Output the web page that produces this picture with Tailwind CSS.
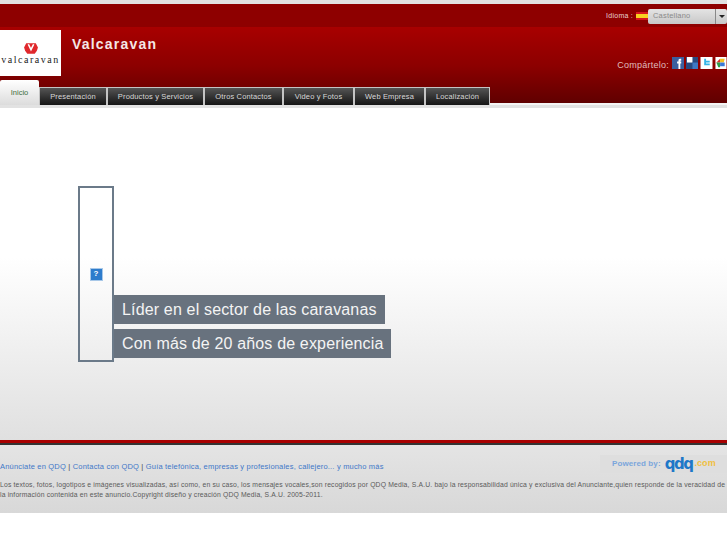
<!DOCTYPE html>
<html lang="es"><head><meta charset="utf-8"><script src="https://cdn.jsdelivr.net/npm/@tailwindcss/browser@4"></script></head>
<body class="w-[727px] h-[545px] overflow-hidden bg-white font-['Liberation_Sans',sans-serif]">
<div class="h-1 bg-[#e2e2e2]"></div>
<header class="h-[101px] flex flex-col relative overflow-hidden">
  <div class="h-[23px] bg-[#8e0000] flex items-center justify-end pt-[1px]">
    <span class="text-[7px] tracking-[0.25px] text-[#e8d0d0] mr-[3px]">Idioma :</span>
    <svg class="w-[12px] h-[8px]" viewBox="0 0 12 8"><rect width="12" height="8" fill="#d8141c"/><rect y="2" width="12" height="4" fill="#f8d020"/></svg>
    <div class="w-[79px] h-[15px] bg-gradient-to-b from-[#e4e4e4] to-[#c8c8c8] rounded-[2px] flex items-center text-[7.500px] tracking-[0.2px] text-[#8a8a8a]">
      <span class="pl-[5px] flex-1">Castellano</span>
      <span class="w-[12px] h-full border-l border-[#888] flex items-center justify-center"><span class="w-0 h-0 border-x-[3px] border-x-transparent border-t-[3px] border-t-[#222]"></span></span>
    </div>
  </div>
  <div class="flex-1 bg-gradient-to-b from-[#a80000] via-[#8c0000] via-50% to-[#5e0000] relative">
    <div class="flex items-start h-[60px]">
      <div class="w-[61px] h-[46px] mt-[3px] bg-white flex flex-col items-center justify-end pb-[12px] overflow-hidden">
        <svg class="w-[16px] h-[12px] mb-[1px]" viewBox="0 0 15 11"><path d="M1 5 3 1h9l2 4-1 3-2 3H4L2 8z" fill="#e0282c"/><path d="M5 2l2.500 5L10 2" fill="none" stroke="#fff" stroke-width="1.500"/></svg>
        <span class="text-[10px] leading-[9px] font-['Liberation_Serif',serif] tracking-[1.5px] text-[#222] whitespace-nowrap">valcaravan</span>
      </div>
      <h1 class="ml-[11px] mt-[7px] text-[14px] leading-[20px] font-bold tracking-[1.2px] text-[#f5e6e6]">Valcaravan</h1>
      <div class="ml-auto mt-[26px] flex items-center gap-[2px] whitespace-nowrap">
        <span class="text-[9px] tracking-[0.25px] text-[#e0bcbc] mt-[6px] mr-[1px]">Compártelo:</span>
        <svg class="w-[12px] h-[12px]" viewBox="0 0 13 13"><rect width="13" height="13" fill="#3b5f9e"/><path d="M7 13V7H5.500V5H7V3.500C7 2.200 8 2 10 2v2H9v1h1v2H9v6z" fill="#fff"/></svg>
        <svg class="w-[12px] h-[12px]" viewBox="0 0 13 13"><rect width="13" height="13" fill="#284a80"/><rect x="1" width="6" height="6" fill="#fff"/><rect x="7" y="6" width="6" height="7" fill="#3d78c4"/></svg>
        <svg class="w-[13px] h-[12px]" viewBox="0 0 13 13"><rect width="13" height="13" fill="#fff"/><path d="M4 2v7h6V7H6V6h4V4H6V2z" fill="#35b5e8"/></svg>
        <svg class="w-[12px] h-[12px]" viewBox="0 0 12 13"><rect width="12" height="13" fill="#fff"/><path d="M1 6 5 2v4z" fill="#d8342c"/><path d="M5 2h5l-1 4H5z" fill="#f4c020"/><path d="M1 6h4v5H3z" fill="#2c9c48"/><path d="M5 6h5v4H5z" fill="#3a78d8"/></svg>
      </div>
    </div>
    <nav class="absolute left-0 bottom-0 flex items-end h-[25px] w-full">
      <a class="w-[39px] h-[25px] bg-gradient-to-b from-white to-[#dcdcdc] flex items-center justify-center text-[7.500px] text-[#3c6e3c] rounded-t-[2px]">Inicio</a>
      <div class="flex h-[18px] text-[7.500px] tracking-[0.15px] text-[#d8d8d8]">
        <a class="w-[68px] border border-b-0 border-[#c4c4c4] bg-gradient-to-b from-[#555] to-[#161616] flex items-center justify-center">Presentación</a>
        <a class="w-[97px] border border-b-0 border-[#c4c4c4] bg-gradient-to-b from-[#555] to-[#161616] flex items-center justify-center">Productos y Servicios</a>
        <a class="w-[79px] border border-b-0 border-[#c4c4c4] bg-gradient-to-b from-[#555] to-[#161616] flex items-center justify-center">Otros Contactos</a>
        <a class="w-[71px] border border-b-0 border-[#c4c4c4] bg-gradient-to-b from-[#555] to-[#161616] flex items-center justify-center">Video y Fotos</a>
        <a class="w-[71px] border border-b-0 border-[#c4c4c4] bg-gradient-to-b from-[#555] to-[#161616] flex items-center justify-center">Web Empresa</a>
        <a class="w-[65px] border border-b-0 border-[#c4c4c4] bg-gradient-to-b from-[#555] to-[#161616] flex items-center justify-center">Localización</a>
      </div>
    </nav>
    <div class="absolute left-[490px] right-0 bottom-0 h-[2px] bg-[#f4f4f4]"></div>
  </div>
</header>
<div class="h-[3px] bg-[#e2e2e2]"></div>
<main class="h-[332px] bg-gradient-to-b from-white from-45% to-[#e0e0e0] pl-[78px] pt-[78px] flex items-start">
  <div class="w-[36px] h-[176px] border-2 border-[#6b7a89] flex items-center justify-center">
    <div class="w-[13px] h-[13px] bg-[#2d7ccc] border border-[#a8c8e8] flex items-center justify-center text-[8px] leading-none font-bold text-white">?</div>
  </div>
  <div class="flex flex-col items-start mt-[109px] gap-[5px]">
    <div class="h-[29px] px-[8px] flex items-center bg-[#68727e] text-[16px] tracking-[0.16px] text-[#f4f4f4] whitespace-nowrap">Líder en el sector de las caravanas</div>
    <div class="h-[29px] px-[8px] flex items-center bg-[#68727e] text-[16px] tracking-[0.16px] text-[#f4f4f4] whitespace-nowrap">Con más de 20 años de experiencia</div>
  </div>
</main>
<div class="h-[3px] bg-[#a80000]"></div>
<div class="h-[2px] bg-[#333]"></div>
<footer class="h-[68px] bg-gradient-to-b from-[#e4e4e4] to-[#d8d8d8] relative">
  <div class="pt-[17px] text-[7.500px] leading-[10px] tracking-[0.19px] text-[#3f78c8] whitespace-nowrap">Anúnciate en QDQ <span class="text-[#444]">|</span> Contacta con QDQ <span class="text-[#444]">|</span> Guía telefónica, empresas y profesionales, callejero... y mucho más</div>
  <p class="mt-[8px] text-[6.800px] leading-[10px] tracking-[0.17px] text-[#5a5a5a] w-[727px]">Los textos, fotos, logotipos e imágenes visualizadas, así como, en su caso, los mensajes vocales,son recogidos por QDQ Media, S.A.U. bajo la responsabilidad única y exclusiva del Anunciante,quien responde de la veracidad de la información contenida en este anuncio.Copyright diseño y creación QDQ Media, S.A.U. 2005-2011.</p>
  <div class="absolute left-[600px] top-[10px] w-[127px] h-[18px] bg-[#dedede] flex items-center pl-[12px] text-[8px] tracking-[0.1px] font-bold text-[#7ba6dc] whitespace-nowrap">Powered by:<span class="ml-[4px] text-[15px] leading-none font-['DejaVu_Sans',sans-serif] font-bold text-[#1e78c8] tracking-[-1.5px]">qdq</span><span class="ml-[2px] text-[9px] text-[#f0c040]">.com</span></div>
</footer>
</body></html>
